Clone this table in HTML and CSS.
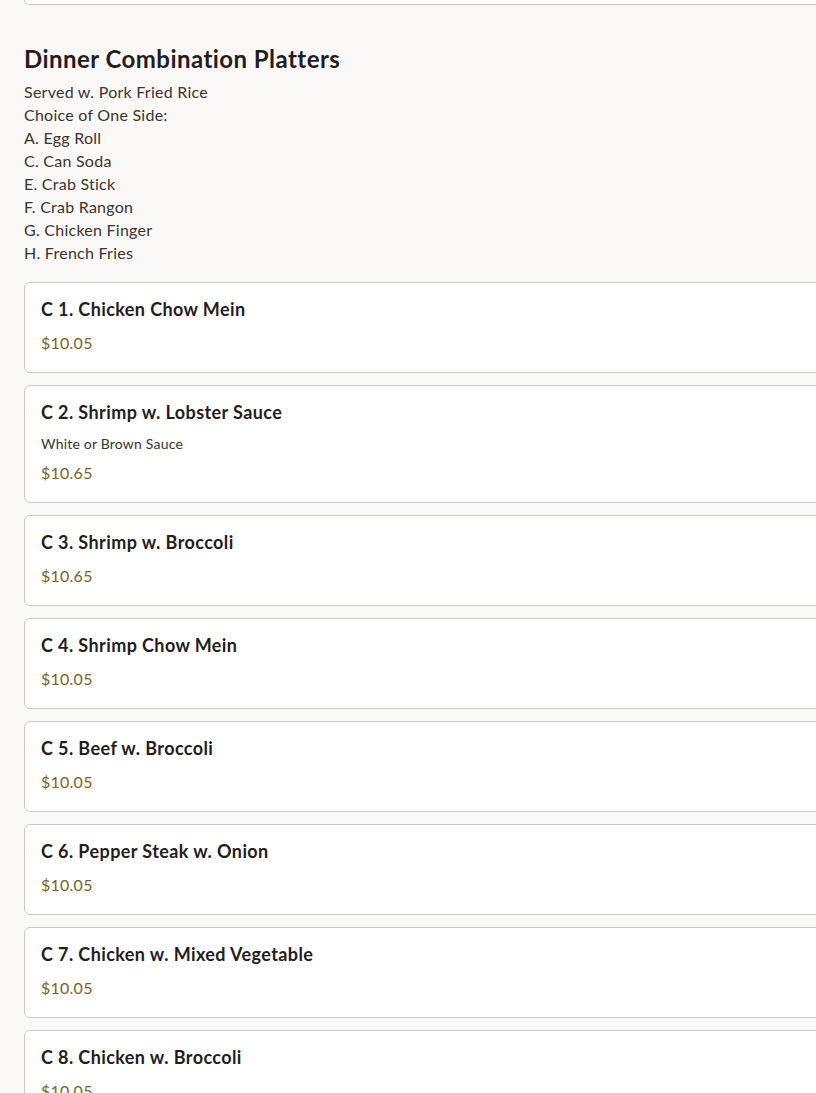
FILE: index.html
```html
<!DOCTYPE html>
<html lang="en">
<head>
<meta charset="utf-8">
<title>Dinner Combination Platters</title>
<link rel="stylesheet" href="styles.css">
</head>
<body>
<main class="menu">
  <div class="prev-card"></div>
  <section class="category">
    <h2 class="category-title">Dinner Combination Platters</h2>
    <div class="category-note">
      <p>Served w. Pork Fried Rice</p>
      <p>Choice of One Side:</p>
      <p>A. Egg Roll</p>
      <p>C. Can Soda</p>
      <p>E. Crab Stick</p>
      <p>F. Crab Rangon</p>
      <p>G. Chicken Finger</p>
      <p>H. French Fries</p>
    </div>
    <ul class="items">
      <li class="item"><h3 class="item-name">C 1. Chicken Chow Mein</h3><p class="item-price">$10.05</p></li>
      <li class="item"><h3 class="item-name">C 2. Shrimp w. Lobster Sauce</h3><p class="item-desc">White or Brown Sauce</p><p class="item-price">$10.65</p></li>
      <li class="item"><h3 class="item-name">C 3. Shrimp w. Broccoli</h3><p class="item-price">$10.65</p></li>
      <li class="item"><h3 class="item-name">C 4. Shrimp Chow Mein</h3><p class="item-price">$10.05</p></li>
      <li class="item"><h3 class="item-name">C 5. Beef w. Broccoli</h3><p class="item-price">$10.05</p></li>
      <li class="item"><h3 class="item-name">C 6. Pepper Steak w. Onion</h3><p class="item-price">$10.05</p></li>
      <li class="item"><h3 class="item-name">C 7. Chicken w. Mixed Vegetable</h3><p class="item-price">$10.05</p></li>
      <li class="item"><h3 class="item-name">C 8. Chicken w. Broccoli</h3><p class="item-price">$10.05</p></li>
    </ul>
  </section>
</main>
</body>
</html>
```

FILE: styles.css
```css
html, body {
  margin: 0;
  padding: 0;
  overflow: hidden;
}
body {
  background: #faf9f7;
  font-family: "Lato", "Noto Sans", sans-serif;
  color: #3a3331;
}
.menu {
  width: 880px;
  padding: 0 0 0 24px;
}
.prev-card {
  height: 4px;
  background: #fff;
  border: 1px solid #c9c7c4;
  border-top: none;
  border-radius: 0 0 6px 6px;
}
.category-title {
  margin: 38px 0 5px;
  font-size: 24px;
  line-height: 32px;
  font-weight: 700;
  letter-spacing: 0.45px;
  color: #241d1c;
}
.category-note p {
  margin: 0;
  font-size: 16px;
  line-height: 23px;
  letter-spacing: 0.25px;
}
.items {
  list-style: none;
  margin: 18px 0 0;
  padding: 0;
  display: flex;
  flex-direction: column;
  gap: 12px;
}
.item {
  background: #fff;
  border: 1px solid #cbc9c6;
  border-radius: 6px;
  padding: 14px 16px 17px;
}
.item-name {
  margin: 0 0 10px;
  font-size: 18px;
  line-height: 24px;
  font-weight: 700;
  letter-spacing: 0.4px;
  color: #241d1c;
}
.item-desc {
  margin: 0 0 7px;
  font-size: 14px;
  line-height: 20px;
  letter-spacing: 0.2px;
  color: #3a3331;
}
.item-price {
  margin: 0;
  font-size: 16px;
  line-height: 24px;
  letter-spacing: 0.25px;
  color: #7a6226;
}
```
